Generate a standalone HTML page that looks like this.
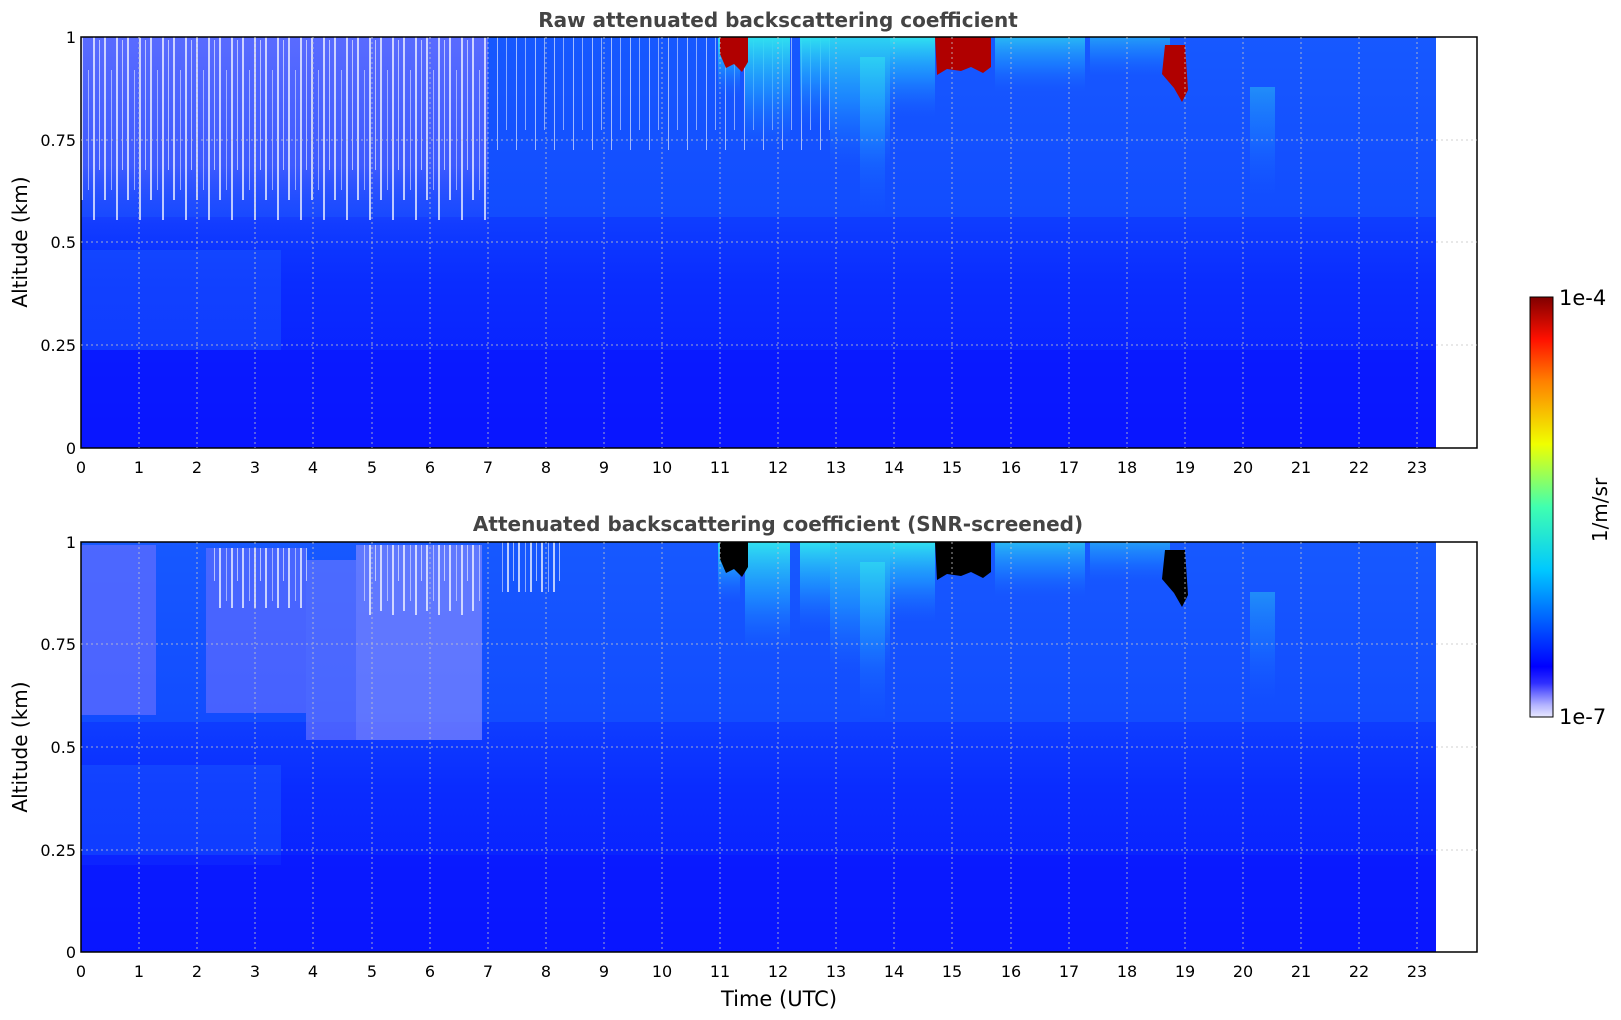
<!DOCTYPE html>
<html><head><meta charset="utf-8"><style>
html,body{margin:0;padding:0;background:#fff}
svg{display:block;font-family:"DejaVu Sans","Liberation Sans",sans-serif}
</style></head><body>
<svg width="1621" height="1020" viewBox="0 0 1621 1020" xmlns="http://www.w3.org/2000/svg">
<defs>
<linearGradient id="vt" x1="0" y1="0" x2="0" y2="1">
<stop offset="0" stop-color="#1650ff"/><stop offset="0.45" stop-color="#0e3cff"/><stop offset="0.6" stop-color="#0a2cff"/><stop offset="1" stop-color="#0818ff"/></linearGradient>
<linearGradient id="noise" x1="0" y1="0" x2="0" y2="1">
<stop offset="0" stop-color="#6a70ff" stop-opacity="0.8"/><stop offset="0.6" stop-color="#5a62ff" stop-opacity="0.6"/><stop offset="1" stop-color="#1030ff" stop-opacity="0"/></linearGradient>
<linearGradient id="cy" x1="0" y1="0" x2="0" y2="1">
<stop offset="0" stop-color="#30e0f0"/><stop offset="0.5" stop-color="#20a8ff" stop-opacity="0.6"/><stop offset="1" stop-color="#1a70ff" stop-opacity="0"/></linearGradient>
<linearGradient id="cb" x1="0" y1="1" x2="0" y2="0">
<stop offset="0" stop-color="#e8e8ff"/><stop offset="0.03" stop-color="#b0b0ff"/><stop offset="0.08" stop-color="#3030ff"/><stop offset="0.12" stop-color="#0000ff"/><stop offset="0.35" stop-color="#00c8ff"/><stop offset="0.5" stop-color="#40ffb0"/><stop offset="0.65" stop-color="#f0ff00"/><stop offset="0.8" stop-color="#ff8000"/><stop offset="0.9" stop-color="#ff1000"/><stop offset="1" stop-color="#800000"/></linearGradient>
<pattern id="stripes" width="23" height="411" patternUnits="userSpaceOnUse">
<rect x="1" y="0" width="2" height="220" fill="#fff" opacity="0.7"/><rect x="7" y="40" width="1" height="130" fill="#fff" opacity="0.6"/><rect x="12" y="10" width="2" height="190" fill="#fff" opacity="0.7"/><rect x="19" y="70" width="1" height="120" fill="#fff" opacity="0.5"/>
</pattern>
<pattern id="strp2" width="19" height="411" patternUnits="userSpaceOnUse">
<rect x="3" y="0" width="1" height="150" fill="#fff" opacity="0.6"/><rect x="12" y="30" width="1" height="100" fill="#fff" opacity="0.5"/>
</pattern>
<g id="clouds">
<rect x="718" y="0" width="22" height="60" fill="url(#cy)"/>
<rect x="745" y="0" width="45" height="110" fill="url(#cy)"/>
<rect x="800" y="0" width="30" height="90" fill="url(#cy)"/>
<rect x="830" y="0" width="60" height="130" fill="url(#cy)" opacity="0.9"/>
<rect x="860" y="20" width="25" height="160" fill="url(#cy)" opacity="0.6"/>
<rect x="890" y="0" width="45" height="80" fill="url(#cy)"/>
<rect x="995" y="0" width="90" height="55" fill="url(#cy)" opacity="0.7"/>
<rect x="1090" y="0" width="80" height="40" fill="url(#cy)" opacity="0.5"/>
<rect x="1250" y="50" width="25" height="110" fill="url(#cy)" opacity="0.4"/>
</g>
</defs>

<!-- TOP PANEL -->
<text x="778" y="27" text-anchor="middle" font-size="20" font-weight="bold" fill="#444">Raw attenuated backscattering coefficient</text>
<rect x="81" y="37" width="1355" height="411" fill="url(#vt)"/>
<rect x="81" y="37" width="1355" height="180" fill="#1a6aff" opacity="0.35"/>
<rect x="81" y="37" width="407" height="215" fill="url(#noise)"/>
<rect x="81" y="37" width="407" height="215" fill="url(#stripes)"/>
<rect x="488" y="37" width="350" height="230" fill="url(#strp2)"/>
<rect x="81" y="250" width="200" height="100" fill="#1a5cff" opacity="0.45"/>
<rect x="81" y="350" width="1355" height="98" fill="#0a14ff" opacity="0.6"/>
<g transform="translate(0,37)"><use href="#clouds"/></g>
<path d="M720 37h28v25l-6 10-8-8-8 4-6-14z" fill="#b00000"/>
<path d="M935 37h56v30l-8 6-12-6-10 4-14-2-10 6z" fill="#b00000"/>
<path d="M1165 45l20 0 3 45-6 12-8-14-12-14z" fill="#b00000"/>
<rect x="1436" y="37" width="41" height="411" fill="#fff"/>
<rect x="81" y="37" width="1396" height="411" fill="none" stroke="#000" stroke-width="1.5"/>

<!-- BOTTOM PANEL -->
<text x="778" y="531" text-anchor="middle" font-size="20" font-weight="bold" fill="#444">Attenuated backscattering coefficient (SNR-screened)</text>
<rect x="81" y="542" width="1355" height="410" fill="url(#vt)"/>
<rect x="81" y="542" width="1355" height="180" fill="#1a6aff" opacity="0.35"/>
<rect x="81" y="545" width="75" height="170" fill="#6a70ff" opacity="0.65"/>
<rect x="206" y="548" width="100" height="165" fill="#6a70ff" opacity="0.6"/>
<rect x="306" y="560" width="50" height="180" fill="#7078ff" opacity="0.6"/>
<rect x="356" y="545" width="126" height="195" fill="#8088ff" opacity="0.7"/>
<rect x="360" y="545" width="120" height="70" fill="url(#stripes)"/>
<rect x="210" y="548" width="100" height="60" fill="url(#stripes)"/>
<rect x="500" y="542" width="60" height="50" fill="url(#stripes)"/>
<rect x="81" y="765" width="200" height="100" fill="#1a5cff" opacity="0.45"/>
<rect x="81" y="855" width="1355" height="97" fill="#0a14ff" opacity="0.6"/>
<g transform="translate(0,542)"><use href="#clouds"/></g>
<path d="M720 542h28v25l-6 10-8-8-8 4-6-14z" fill="#000"/>
<path d="M935 542h56v30l-8 6-12-6-10 4-14-2-10 6z" fill="#000"/>
<path d="M1165 550l20 0 3 45-6 12-8-14-12-14z" fill="#000"/>
<rect x="1436" y="542" width="41" height="410" fill="#fff"/>
<rect x="81" y="542" width="1396" height="410" fill="none" stroke="#000" stroke-width="1.5"/>

<!-- grid -->
<g stroke="#c8c8c8" stroke-width="1" stroke-dasharray="2,3" opacity="0.8">
<path d="M139 37v411M197 37v411M255 37v411M313 37v411M372 37v411M430 37v411M488 37v411M546 37v411M604 37v411M662 37v411M720 37v411M778 37v411M836 37v411M894 37v411M952 37v411M1011 37v411M1069 37v411M1127 37v411M1185 37v411M1243 37v411M1301 37v411M1359 37v411M1417 37v411"/>
<path d="M139 542v410M197 542v410M255 542v410M313 542v410M372 542v410M430 542v410M488 542v410M546 542v410M604 542v410M662 542v410M720 542v410M778 542v410M836 542v410M894 542v410M952 542v410M1011 542v410M1069 542v410M1127 542v410M1185 542v410M1243 542v410M1301 542v410M1359 542v410M1417 542v410"/>
<path d="M81 140h1396M81 242h1396M81 345h1396M81 644h1396M81 747h1396M81 850h1396"/>
</g>

<g font-size="16" fill="#000" text-anchor="middle">
<text x="81" y="473">0</text><text x="139" y="473">1</text><text x="197" y="473">2</text><text x="255" y="473">3</text><text x="313" y="473">4</text><text x="372" y="473">5</text><text x="430" y="473">6</text><text x="488" y="473">7</text><text x="546" y="473">8</text><text x="604" y="473">9</text><text x="662" y="473">10</text><text x="720" y="473">11</text><text x="778" y="473">12</text><text x="836" y="473">13</text><text x="894" y="473">14</text><text x="952" y="473">15</text><text x="1011" y="473">16</text><text x="1069" y="473">17</text><text x="1127" y="473">18</text><text x="1185" y="473">19</text><text x="1243" y="473">20</text><text x="1301" y="473">21</text><text x="1359" y="473">22</text><text x="1417" y="473">23</text>
<text x="81" y="977">0</text><text x="139" y="977">1</text><text x="197" y="977">2</text><text x="255" y="977">3</text><text x="313" y="977">4</text><text x="372" y="977">5</text><text x="430" y="977">6</text><text x="488" y="977">7</text><text x="546" y="977">8</text><text x="604" y="977">9</text><text x="662" y="977">10</text><text x="720" y="977">11</text><text x="778" y="977">12</text><text x="836" y="977">13</text><text x="894" y="977">14</text><text x="952" y="977">15</text><text x="1011" y="977">16</text><text x="1069" y="977">17</text><text x="1127" y="977">18</text><text x="1185" y="977">19</text><text x="1243" y="977">20</text><text x="1301" y="977">21</text><text x="1359" y="977">22</text><text x="1417" y="977">23</text>
</g>
<g font-size="16" fill="#000" text-anchor="end">
<text x="76" y="43">1</text><text x="76" y="146">0.75</text><text x="76" y="248">0.5</text><text x="76" y="351">0.25</text><text x="76" y="454">0</text>
<text x="76" y="548">1</text><text x="76" y="650">0.75</text><text x="76" y="753">0.5</text><text x="76" y="856">0.25</text><text x="76" y="958">0</text>
</g>
<text transform="translate(27,242) rotate(-90)" text-anchor="middle" font-size="20">Altitude (km)</text>
<text transform="translate(27,747) rotate(-90)" text-anchor="middle" font-size="20">Altitude (km)</text>
<text x="779" y="1006" text-anchor="middle" font-size="21">Time (UTC)</text>

<!-- colorbar -->
<rect x="1530" y="297" width="23" height="420" fill="url(#cb)" stroke="#000" stroke-width="1"/>
<text x="1559" y="305" font-size="21">1e-4</text>
<text x="1559" y="724" font-size="21">1e-7</text>
<text transform="translate(1607,510) rotate(-90)" text-anchor="middle" font-size="20">1/m/sr</text>
</svg>
</body></html>
